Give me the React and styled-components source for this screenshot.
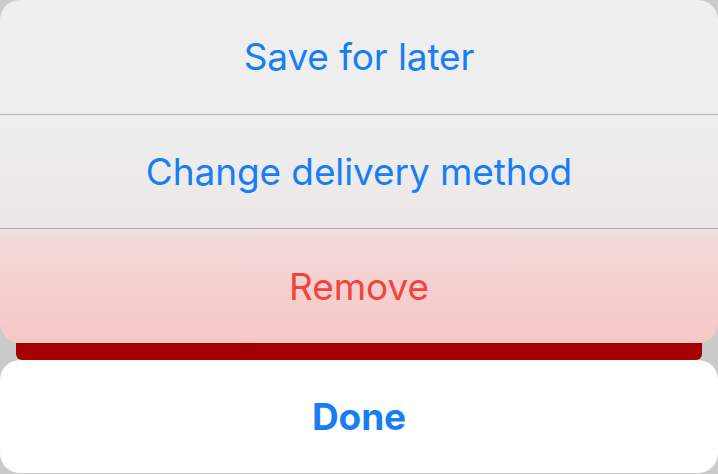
import React from "react";
import styled, { createGlobalStyle } from "styled-components";

const Global = createGlobalStyle`
  html, body { margin: 0; padding: 0; background: #cacaca; }
  body { font-family: Inter, "Noto Sans", "Liberation Sans", sans-serif; }
`;

const Sheet = styled.div`
  width: 718px;
  height: 474px;
  display: flex;
  flex-direction: column;
  overflow: hidden;
  background: #cacaca;
`;

const ActionGroup = styled.div`
  height: 343px;
  border-radius: 20px;
  background: linear-gradient(
    to bottom,
    #efefef 0%,
    #eeeeee 33%,
    #edebeb 52%,
    #eee5e5 66%,
    #f3dada 69%,
    #f5d0d0 84%,
    #f7c7c7 100%
  );
  display: flex;
  flex-direction: column;
  overflow: hidden;
  position: relative;
  z-index: 1;
`;

const Action = styled.button`
  flex: 1;
  border: none;
  background: transparent;
  font-family: inherit;
  font-size: 37px;
  font-weight: ${(p) => (p.$bold ? 700 : 400)};
  color: ${(p) => (p.$danger ? "#f3433b" : "#177ef4")};
  display: flex;
  align-items: center;
  justify-content: center;
  padding: 0;
  letter-spacing: -0.1px;
`;

const Divider = styled.div`
  height: 1px;
  background: #b3b0b0;
  flex: none;
`;

const BehindStrip = styled.div`
  height: 17px;
  margin: 0 16px;
  background: #a30000;
  border-radius: 0 0 6px 6px;
  flex: none;
`;

const DoneCard = styled.div`
  height: 113px;
  background: #ffffff;
  border-radius: 20px;
  display: flex;
  flex: none;
`;

export default function App() {
  return (
    <>
      <Global />
      <Sheet>
        <ActionGroup>
          <Action>Save for later</Action>
          <Divider />
          <Action>Change delivery method</Action>
          <Divider />
          <Action $danger>Remove</Action>
        </ActionGroup>
        <BehindStrip />
        <DoneCard>
          <Action $bold>Done</Action>
        </DoneCard>
      </Sheet>
    </>
  );
}
